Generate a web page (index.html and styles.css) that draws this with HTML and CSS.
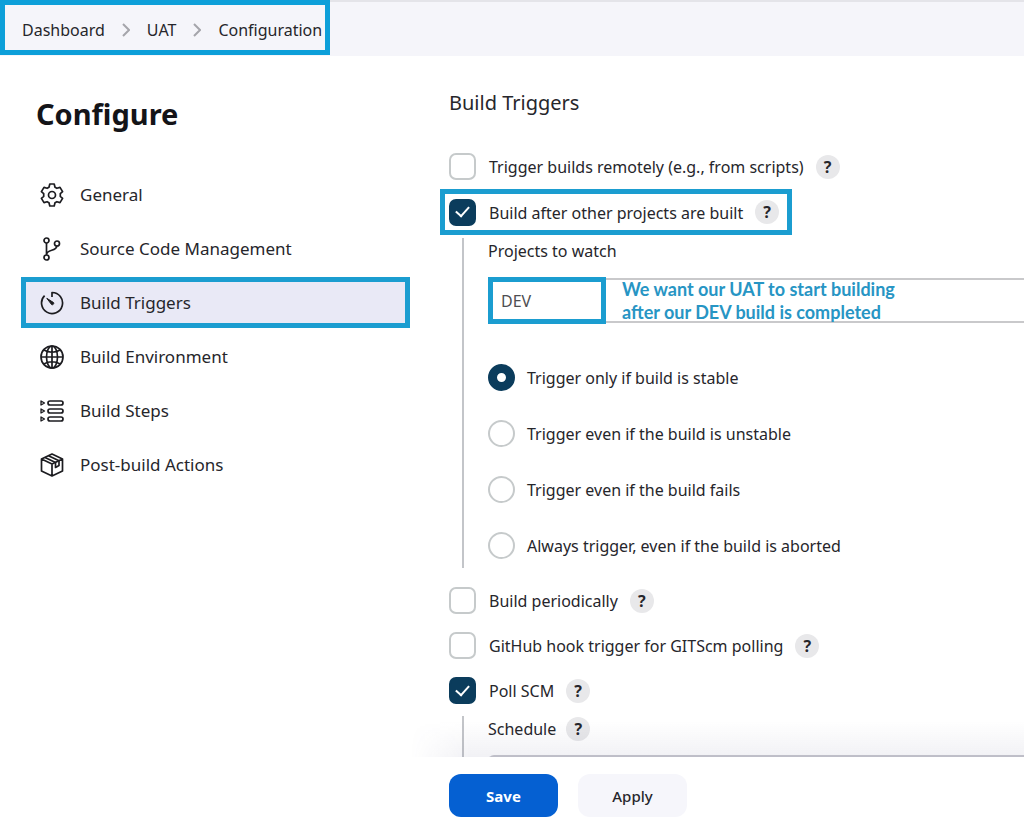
FILE: index.html
```html
<!doctype html>
<html lang="en">
  <head>
    <meta charset="utf-8">
    <title>UAT Config</title>
    <link rel="stylesheet" href="styles.css">
  </head>
  <body>
    <header class="topbar">
      <nav class="breadcrumbs marked">
        <a href="#">Dashboard</a>
        <svg class="chevron" viewBox="0 0 8 14"><path d="M1 1l6 6-6 6"/></svg>
        <a href="#">UAT</a>
        <svg class="chevron" viewBox="0 0 8 14"><path d="M1 1l6 6-6 6"/></svg>
        <a href="#">Configuration</a>
      </nav>
    </header>

    <div class="page">
      <aside class="sidebar">
        <h1>Configure</h1>
        <nav class="tasks">
          <a class="task" href="#general">
            <svg viewBox="0 0 24 24"><path d="M9.8 1h4.4l.8 3.2 1.9 1.1 3.1-.9 2.6 4.2-2.3 2v2.800l2.300 2-2.600 4.200-3.100-.9-1.900 1.100-.8 3.200H9.800l-.8-3.200-1.900-1.100-3.100.9-2.600-4.200 2.300-2v-2.800l-2.300-2L4 4.400l3.100.9L9 4.200z"/><circle cx="12" cy="12" r="3.500"/></svg>
            General
          </a>
          <a class="task" href="#scm">
            <svg viewBox="0 0 24 24"><circle cx="6.500" cy="3.500" r="2.500"/><circle cx="6.500" cy="20.500" r="2.500"/><circle cx="17" cy="6.500" r="2.500"/><path d="M6.500 6v12M16.800 9c-.3 6-10.300 2.500-10.300 9"/></svg>
            Source Code Management
          </a>
          <a class="task marked selected" href="#triggers">
            <svg viewBox="0 0 24 24"><path d="M12 6V1.500A10.500 10.500 0 1 1 4.600 4.600"/><path class="hand" d="M6.800 7.300l6.800 4.300a1.500 1.500 0 0 1-2 2z"/></svg>
            Build Triggers
          </a>
          <a class="task" href="#environment">
            <svg viewBox="0 0 24 24"><circle cx="12" cy="12" r="11"/><ellipse cx="12" cy="12" rx="5.500" ry="11"/><path d="M12 1v22M1 12h22M4 5c4.500 3 11.500 3 16 0M4 19c4.500-3 11.500-3 16 0"/></svg>
            Build Environment
          </a>
          <a class="task" href="#steps">
            <svg viewBox="0 0 24 24"><rect x="8" y="2" width="15" height="4" rx="2"/><rect x="8" y="10" width="15" height="4" rx="2"/><rect x="8" y="18" width="15" height="4" rx="2"/><path class="thin" d="M1 2l3.500 2L1 6zM1 10l3.500 2L1 14zM1 18l3.500 2L1 22z"/></svg>
            Build Steps
          </a>
          <a class="task" href="#post">
            <svg viewBox="0 0 24 24"><path d="M12 1l10.500 5v12L12 23 1.500 18V6zM1.500 6L12 11l10.500-5M12 11v12"/><path d="M5 4.500l10.500 5v5l3.500-2V7.700L8.500 2.800"/></svg>
            Post-build Actions
          </a>
        </nav>
      </aside>

      <main class="content">
        <form class="config">
          <div class="fields">
            <h2>Build Triggers</h2>

            <div class="option">
              <input type="checkbox" id="remote">
              <label for="remote">Trigger builds remotely (e.g., from scripts)</label>
              <button type="button" class="help">?</button>
            </div>

            <div class="option marked">
              <input type="checkbox" id="after" checked>
              <label for="after">Build after other projects are built</label>
              <button type="button" class="help">?</button>
            </div>
            <div class="nested">
              <label class="field-label" for="projects">Projects to watch</label>
              <div class="watch">
                <input class="marked" type="text" id="projects" value="DEV">
                <p class="note"><span>We want our UAT to start building<br>after our DEV build is completed</span></p>
              </div>
              <div class="radios">
                <div class="radio"><input type="radio" name="threshold" id="stable" checked><label for="stable">Trigger only if build is stable</label></div>
                <div class="radio"><input type="radio" name="threshold" id="unstable"><label for="unstable">Trigger even if the build is unstable</label></div>
                <div class="radio"><input type="radio" name="threshold" id="fails"><label for="fails">Trigger even if the build fails</label></div>
                <div class="radio"><input type="radio" name="threshold" id="aborted"><label for="aborted">Always trigger, even if the build is aborted</label></div>
              </div>
            </div>

            <div class="option">
              <input type="checkbox" id="periodic">
              <label for="periodic">Build periodically</label>
              <button type="button" class="help">?</button>
            </div>
            <div class="option">
              <input type="checkbox" id="hook">
              <label for="hook">GitHub hook trigger for GITScm polling</label>
              <button type="button" class="help">?</button>
            </div>
            <div class="option">
              <input type="checkbox" id="poll" checked>
              <label for="poll">Poll SCM</label>
              <button type="button" class="help">?</button>
            </div>
            <div class="nested">
              <div class="field-label">
                <label for="schedule">Schedule</label>
                <button type="button" class="help">?</button>
              </div>
              <textarea class="schedule" id="schedule"></textarea>
            </div>
          </div>

          <div class="actions">
            <button type="submit" class="btn primary">Save</button>
            <button type="button" class="btn">Apply</button>
          </div>
        </form>
      </main>
    </div>
  </body>
</html>
```

FILE: styles.css
```css
* {
  box-sizing: border-box;
}
body {
  display: flex;
  flex-direction: column;
  height: 100vh;
  margin: 0;
  overflow: hidden;
  background-color: #fff;
  color: #26262b;
  font-family: "Noto Sans", "Open Sans", sans-serif;
  font-size: 16px;
  line-height: 24px;
}
a {
  color: inherit;
  text-decoration: none;
}
h1, h2, p {
  margin: 0;
}
button, input, textarea {
  margin: 0;
  font: inherit;
  color: inherit;
}
.marked {
  border: 5px solid #1b9dd0;
}

.topbar {
  display: flex;
  flex: none;
  height: 56px;
  background-color: #f5f5fa;
  box-shadow: inset 0 2px 0 #e4e4e9;
}
.breadcrumbs {
  display: flex;
  align-items: center;
  gap: 17px;
  height: 55px;
  padding: 5px 3px 0 17px;
  border-color: #0d9fd9;
}
.chevron {
  width: 8px;
  height: 14px;
  fill: none;
  stroke: #a5a5ab;
  stroke-width: 2;
}

.page {
  display: flex;
  flex: 1;
  min-height: 0;
}
.sidebar {
  flex: none;
  width: 410px;
  padding: 38px 0 0 21px;
}
h1 {
  padding-left: 15px;
  font-size: 29px;
  line-height: 40px;
  color: #141418;
}
.tasks {
  display: flex;
  flex-direction: column;
  gap: 3px;
  margin-top: 35px;
}
.task {
  display: flex;
  align-items: center;
  gap: 16px;
  height: 51px;
  padding: 0 14px;
  border: 5px solid transparent;
  font-size: 17px;
}
.task.selected {
  border-color: #1b9dd0;
  background-color: #e9e9f6;
}
.task svg {
  width: 24px;
  height: 24px;
  fill: none;
  stroke: #1c1c20;
  stroke-width: 1.7;
  stroke-linejoin: round;
}
.task .hand {
  fill: #1c1c20;
  stroke-width: 1;
}
.task .thin {
  stroke-width: 1.3;
}

.content {
  flex: 1;
  min-width: 0;
}
.config {
  display: flex;
  flex-direction: column;
  height: 100%;
}
.fields {
  flex: 1;
  min-height: 0;
  padding: 32px 0 0 30px;
  overflow-y: auto;
  scrollbar-width: none;
}
h2 {
  margin-bottom: 26px;
  padding-left: 9px;
  font-size: 20px;
  font-weight: 400;
  line-height: 30px;
}
.option {
  display: flex;
  align-items: center;
  width: max-content;
  height: 45px;
  padding: 0 8px 0 4px;
  border-left: 5px solid transparent;
}
.option.marked {
  height: 46px;
  border-color: #1b9dd0;
}
.option label {
  padding: 1px 12px 0 13px;
}
input[type="checkbox"], input[type="radio"] {
  display: grid;
  place-items: center;
  flex: none;
  width: 27px;
  height: 27px;
  border: 2px solid #c6cacb;
  border-radius: 7px;
  background-color: #fff;
  appearance: none;
}
input[type="checkbox"]:checked {
  border-color: #0b3c5c;
  background-color: #0b3c5c;
}
input[type="checkbox"]:checked::before {
  content: "";
  width: 11px;
  height: 6px;
  margin-bottom: 4px;
  border: solid #fff;
  border-width: 0 0 2px 2px;
  transform: rotate(-48deg);
}
input[type="radio"] {
  border-radius: 50%;
}
input[type="radio"]:checked {
  border: 9px solid #0b3c5c;
}
.help {
  width: 24px;
  height: 24px;
  padding: 0;
  border: none;
  border-radius: 50%;
  background-color: #e8e8ea;
  font-size: 16px;
  font-weight: 700;
  line-height: 24px;
}

.nested {
  margin: 3px 0 10px 22px;
  padding: 0 0 9px 24px;
  border-left: 2px solid #c3c5c9;
}
.field-label {
  display: flex;
  align-items: center;
  gap: 10px;
  height: 26px;
}
.watch {
  display: flex;
  height: 47px;
  margin-top: 13px;
}
.watch input {
  width: 118px;
  padding: 0 8px;
  color: #4e4e52;
  outline: none;
}
.note {
  display: flex;
  flex: 1;
  align-items: center;
  margin: 1px 0;
  padding-left: 16px;
  border: solid #c9c9cb;
  border-width: 2px 0;
  color: #2795c4;
  font-family: Lato, sans-serif;
  font-size: 18px;
  font-weight: 700;
  line-height: 23px;
  white-space: nowrap;
}
.radios {
  display: flex;
  flex-direction: column;
  gap: 29px;
  margin-top: 40px;
}
.radio {
  display: flex;
  align-items: center;
  gap: 12px;
  height: 27px;
}
.schedule {
  display: block;
  width: 100%;
  height: 90px;
  margin-top: 13px;
  border: 2px solid #c9c9cf;
  border-right: none;
  border-radius: 6px 0 0 6px;
  resize: none;
}

.actions {
  position: relative;
  display: flex;
  flex: none;
  gap: 20px;
  padding: 17px 0 15px 39px;
  background-color: #fff;
}
.actions::before {
  content: "";
  position: absolute;
  right: 0;
  bottom: 100%;
  left: 0;
  height: 36px;
  background: linear-gradient(transparent, rgba(60, 60, 110, 0.07));
  mask-image: linear-gradient(90deg, transparent, #000 60px);
  pointer-events: none;
}
.btn {
  min-width: 109px;
  height: 43px;
  border: none;
  border-radius: 12px;
  background-color: #f6f6fb;
  font-size: 15px;
  font-weight: 500;
}
.btn.primary {
  background-color: #0560d2;
  color: #fff;
  font-weight: 700;
}
```
